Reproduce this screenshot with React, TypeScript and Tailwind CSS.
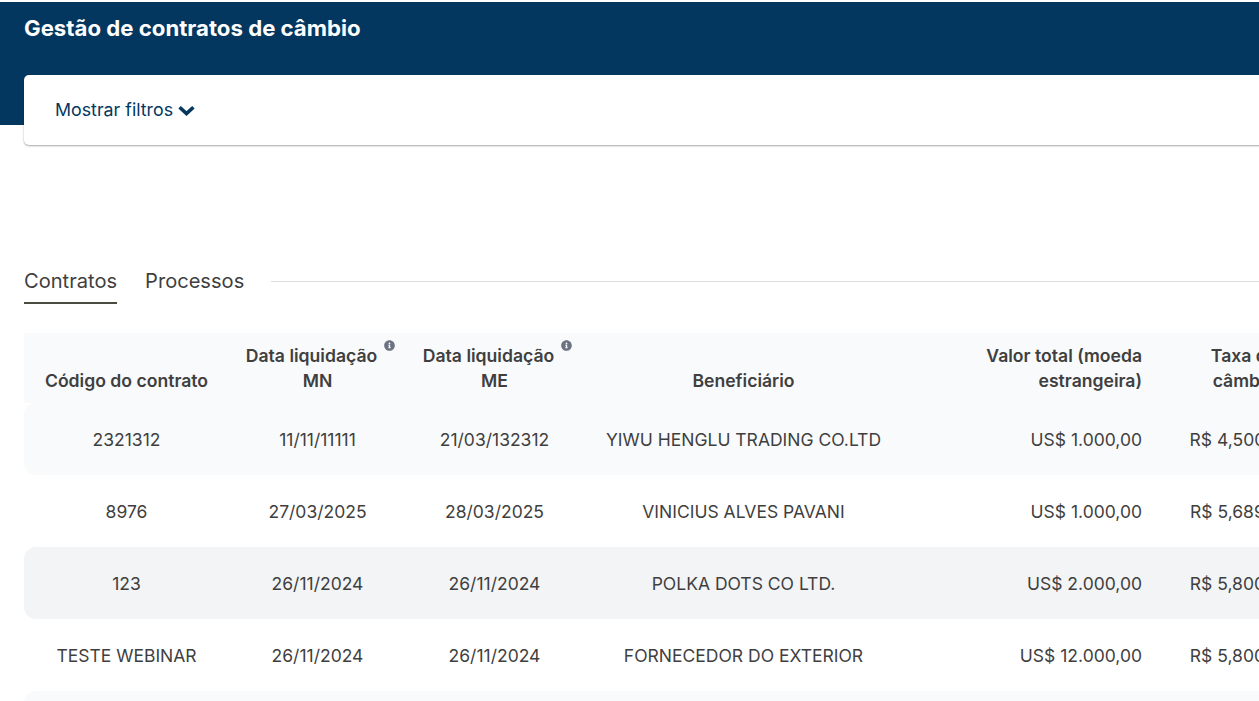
import React from 'react';
import { FaInfoCircle } from 'react-icons/fa';

const rows = [
  ['2321312', '11/11/11111', '21/03/132312', 'YIWU HENGLU TRADING CO.LTD', 'US$ 1.000,00', 'R$ 4,500000'],
  ['8976', '27/03/2025', '28/03/2025', 'VINICIUS ALVES PAVANI', 'US$ 1.000,00', 'R$ 5,689000'],
  ['123', '26/11/2024', '26/11/2024', 'POLKA DOTS CO LTD.', 'US$ 2.000,00', 'R$ 5,800000'],
  ['TESTE WEBINAR', '26/11/2024', '26/11/2024', 'FORNECEDOR DO EXTERIOR', 'US$ 12.000,00', 'R$ 5,800000'],
  ['456', '26/11/2024', '26/11/2024', 'FORNECEDOR DO EXTERIOR', 'US$ 5.000,00', 'R$ 5,800000'],
];

const rowColor = (i: number) => {
  if (i === 2) return 'bg-[#f2f4f6]';
  return i % 2 === 0 ? 'bg-[#f9fafb]' : 'bg-white';
};

const DateHeader = ({ suffix }: { suffix: string }) => (
  <th className="px-2 pb-[10px] align-bottom text-center font-semibold">
    <span className="relative mr-[12px] inline-block">
      Data liquidação
      <FaInfoCircle className="absolute -right-[18px] top-[-3px] text-[11px] text-[#6b7280]" />
    </span>
    <br />
    {suffix}
  </th>
);

const App = () => {
  return (
    <div className="h-[701px] w-[1259px] overflow-hidden bg-white pt-[2px] font-['Inter',sans-serif] text-[#3f3f3f]">
      <div className="w-[1500px]">
        {/* Header */}
        <div className="h-[123px] bg-[#03375f] pl-6 pt-[12px]">
          <h1 className="text-[22.2px] leading-[28px] font-bold text-white">Gestão de contratos de câmbio</h1>
        </div>

        {/* Filters */}
        <div className="ml-6 -mt-[50px] flex h-[70px] items-center rounded-l-[5px] bg-white pl-[31px] shadow-[0_1px_2px_rgba(0,0,0,0.35)]">
          <button className="flex items-center gap-[5px] pt-[1px] text-[17.8px] text-[#03375f]">
            Mostrar filtros
            <svg viewBox="0 0 17 11" className="h-[11px] w-[17px]" fill="none" stroke="currentColor" strokeWidth="3.6">
              <path d="M1.6 2.2 L8.5 8.6 L15.4 2.2" />
            </svg>
          </button>
        </div>

        {/* Tabs */}
        <div className="ml-6 mt-[118px] flex items-center">
          <div className="h-[41px] border-b-2 border-[#4b4a40] text-[20.1px] leading-[36px]">Contratos</div>
          <div className="ml-7 h-[41px] text-[20.1px] leading-[36px]">Processos</div>
          <div className="ml-[27px] mb-[5px] h-px flex-1 bg-[#dcdcdc]" />
        </div>

        {/* Table */}
        <table className="ml-6 mt-[29px] w-[1476px] table-fixed text-[17.6px]">
          <colgroup>
            <col className="w-[205px]" />
            <col className="w-[177px]" />
            <col className="w-[177px]" />
            <col className="w-[321px]" />
            <col className="w-[238px]" />
            <col className="w-[204px]" />
            <col />
          </colgroup>
          <thead>
            <tr className="h-[70px] bg-[#f9fafb] leading-[25px]">
              <th className="px-2 pb-[10px] align-bottom text-center font-semibold">Código do contrato</th>
              <DateHeader suffix="MN" />
              <DateHeader suffix="ME" />
              <th className="px-4 pb-[10px] align-bottom text-center font-semibold">Beneficiário</th>
              <th className="pl-10 pb-[10px] align-bottom text-right font-semibold">
                Valor total (moeda
                <br />
                estrangeira)
              </th>
              <th className="px-4 pb-[10px] align-bottom text-center font-semibold">
                Taxa de
                <br />
                câmbio
              </th>
              <th />
            </tr>
          </thead>
          <tbody>
            {rows.map((row, i) => (
              <tr key={i} className={`h-[72px] text-[17.5px] ${rowColor(i)}`}>
                <td className="rounded-l-xl px-2 pt-[3px] text-center">{row[0]}</td>
                <td className="px-2 pt-[3px] text-center">{row[1]}</td>
                <td className="px-2 pt-[3px] text-center">{row[2]}</td>
                <td className="px-2 pt-[3px] text-center">{row[3]}</td>
                <td className="pt-[3px] text-right">{row[4]}</td>
                <td className="px-2 pt-[3px] text-center">{row[5]}</td>
                <td />
              </tr>
            ))}
          </tbody>
        </table>
      </div>
    </div>
  );
};

export default App;
